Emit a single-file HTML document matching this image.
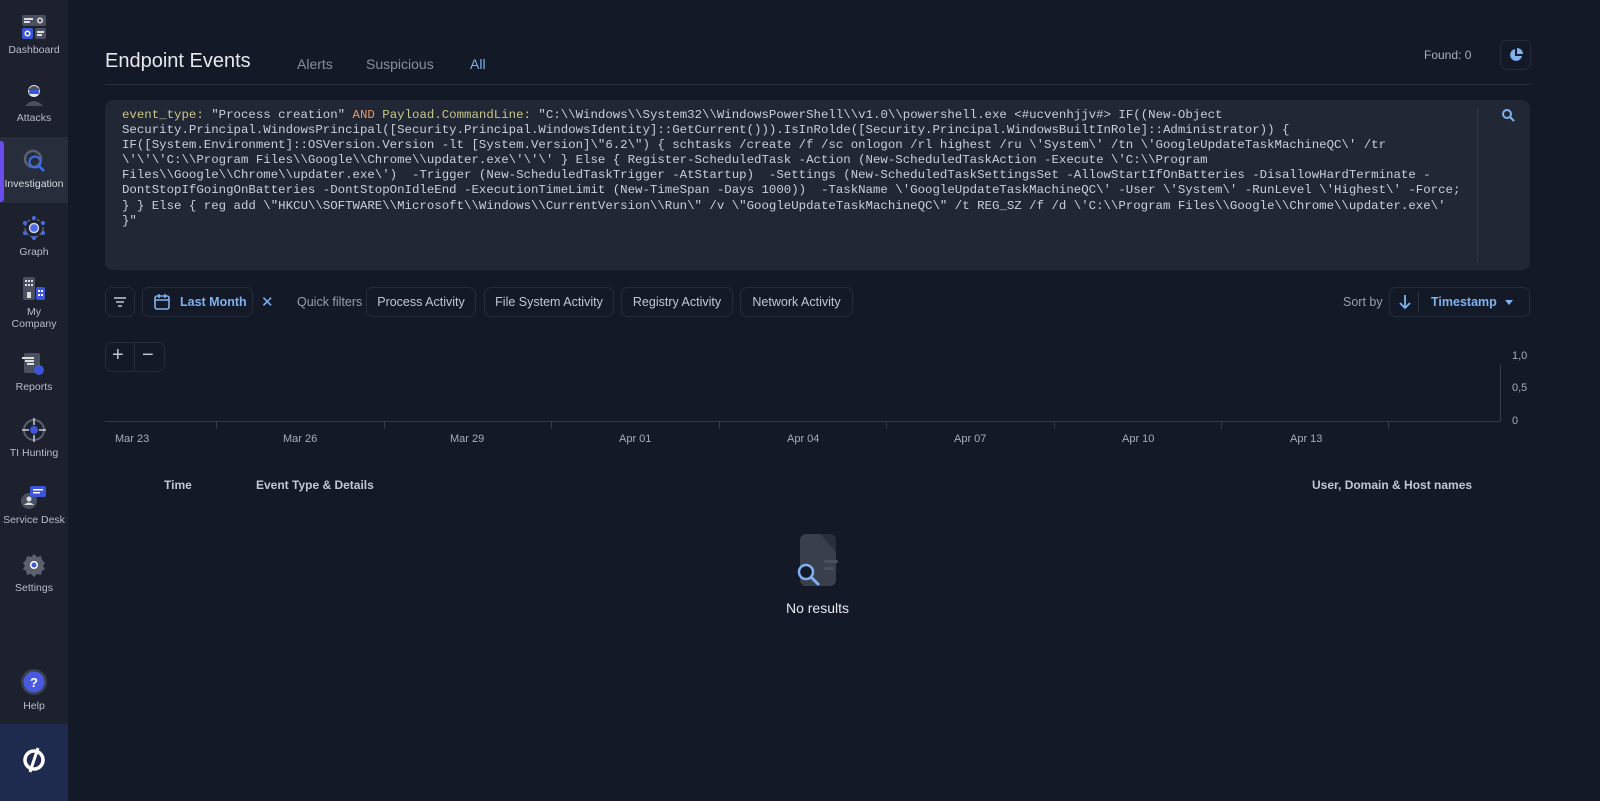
<!DOCTYPE html>
<html><head><meta charset="utf-8"><style>
*{margin:0;padding:0;box-sizing:border-box}
body{width:1600px;height:801px;background:#141927;font-family:"Liberation Sans",sans-serif;color:#c8ccd6;position:relative;overflow:hidden}
.a{position:absolute}
.side{left:0;top:0;width:68px;height:801px;background:#1d212d}
.nav{position:absolute;left:0;width:68px;text-align:center;font-size:10.5px;color:#b9bdc8;line-height:12px}
.nav svg{display:block;margin:0 auto 4px}
.q{font-family:"Liberation Mono",monospace;font-size:12.4px;line-height:15.1px;color:#b6c8e6;white-space:pre}
.btn{position:absolute;height:30px;border:1px solid #262c3b;border-radius:7px;font-size:12.5px;color:#c2c7d2;line-height:28px;text-align:center}
.tick{position:absolute;top:430px;width:1px;height:8px;background:#333a4a}
.lbl{position:absolute;top:433px;font-size:11px;color:#a8adb8}
</style></head><body>
<div class="a side"></div>
<div class="a" style="left:0;top:137px;width:68px;height:66px;background:#282d3b"></div>
<div class="a" style="left:0;top:141px;width:4px;height:61px;background:#6a4cf0;border-radius:0 3px 3px 0"></div>
<div class="a" style="left:0;top:724px;width:68px;height:77px;background:#1f2a4f"></div>

<div class="nav" style="top:14px"><svg width="26" height="26" viewBox="0 0 26 26"><rect x="1" y="1" width="24" height="11" rx="2" fill="#4a5060"/><rect x="3" y="4" width="9" height="2" fill="#ddd"/><rect x="3" y="7" width="6" height="2" fill="#ddd"/><circle cx="19" cy="6.5" r="2.3" fill="none" stroke="#ddd" stroke-width="1.5"/><rect x="1" y="14" width="11" height="11" rx="2" fill="#3d55d8"/><circle cx="6.5" cy="19.5" r="2.3" fill="none" stroke="#fff" stroke-width="1.5"/><rect x="14" y="14" width="11" height="11" rx="2" fill="#4a5060"/><rect x="16" y="17" width="7" height="2" fill="#ddd"/><rect x="16" y="20" width="5" height="2" fill="#ddd"/></svg>Dashboard</div>
<div class="nav" style="top:82px"><svg width="26" height="26" viewBox="0 0 26 26"><circle cx="13" cy="9" r="6" fill="#e6e8ee"/><path d="M7 8 Q13 0 19 8Z" fill="#4a5060"/><rect x="8" y="8" width="10" height="4" rx="1" fill="#3d55d8"/><path d="M4 24 Q13 14 22 24Z" fill="#4a5060"/></svg>Attacks</div>
<div class="nav" style="top:148px;color:#d6d9e0"><svg width="26" height="26" viewBox="0 0 26 26"><circle cx="12" cy="11" r="8" fill="none" stroke="#5a6070" stroke-width="2.5"/><circle cx="14" cy="14" r="5.5" fill="none" stroke="#3d6ee8" stroke-width="2"/><path d="M18 18 L23 23" stroke="#3d6ee8" stroke-width="2.5"/></svg>Investigation</div>
<div class="nav" style="top:214px"><svg width="28" height="28" viewBox="0 0 28 28"><circle cx="14" cy="14" r="9" fill="none" stroke="#5a6070" stroke-width="1.5" stroke-dasharray="3 2"/><circle cx="14" cy="14" r="4.5" fill="#4a6ae8" stroke="#ccd" stroke-width="1.5"/><circle cx="14" cy="4" r="2" fill="#4a6ae8"/><circle cx="14" cy="24" r="2" fill="#4a6ae8"/><circle cx="5" cy="9" r="2" fill="#4a6ae8"/><circle cx="23" cy="9" r="2" fill="#4a6ae8"/><circle cx="5" cy="19" r="2" fill="#4a6ae8"/><circle cx="23" cy="19" r="2" fill="#4a6ae8"/></svg>Graph</div>
<div class="nav" style="top:276px"><svg width="26" height="26" viewBox="0 0 26 26"><rect x="2" y="1" width="12" height="23" rx="2" fill="#4a5060"/><g fill="#ddd"><rect x="4" y="4" width="2" height="2"/><rect x="7" y="4" width="2" height="2"/><rect x="10" y="4" width="2" height="2"/><rect x="4" y="8" width="2" height="2"/><rect x="7" y="8" width="2" height="2"/><rect x="10" y="8" width="2" height="2"/><rect x="6" y="16" width="4" height="6"/></g><rect x="15" y="11" width="9" height="13" rx="2" fill="#3d55d8"/><g fill="#fff"><rect x="17" y="14" width="2" height="2"/><rect x="20" y="14" width="2" height="2"/><rect x="17" y="18" width="2" height="2"/><rect x="20" y="18" width="2" height="2"/></g></svg>My<br>Company</div>
<div class="nav" style="top:351px"><svg width="26" height="26" viewBox="0 0 26 26"><rect x="3" y="2" width="16" height="20" rx="2" fill="#4a5060"/><g fill="#ddd"><rect x="1" y="6" width="12" height="2"/><rect x="4" y="9" width="9" height="2"/><rect x="6" y="12" width="7" height="2"/></g><circle cx="18" cy="19" r="5" fill="#3d55d8"/></svg>Reports</div>
<div class="nav" style="top:417px"><svg width="26" height="26" viewBox="0 0 26 26"><circle cx="13" cy="13" r="10" fill="none" stroke="#5a6070" stroke-width="2"/><path d="M13 1v7M13 18v7M1 13h7M18 13h7" stroke="#ccd" stroke-width="1.5"/><circle cx="13" cy="13" r="4" fill="#3d55d8"/></svg>TI Hunting</div>
<div class="nav" style="top:484px"><svg width="28" height="26" viewBox="0 0 28 26"><circle cx="9" cy="17" r="8" fill="#4a5060"/><circle cx="9" cy="15" r="2.5" fill="#ddd"/><path d="M4 21 Q9 16 14 21Z" fill="#ddd"/><rect x="10" y="2" width="16" height="11" rx="2" fill="#3d55d8"/><g fill="#fff"><rect x="13" y="5" width="10" height="1.5"/><rect x="13" y="8" width="7" height="1.5"/></g></svg>Service Desk</div>
<div class="nav" style="top:552px"><svg width="26" height="26" viewBox="0 0 26 26"><path d="M13 2l3 3 4-1 1 4 3 3-2 3 2 3-3 2-1 4-4-1-3 3-3-3-4 1-1-4-3-2 2-3-2-3 3-3 1-4 4 1z" fill="#5a6070"/><circle cx="13" cy="13" r="4" fill="#fff"/><circle cx="13" cy="13" r="2.5" fill="#3d55d8"/></svg>Settings</div>
<div class="nav" style="top:668px"><svg width="28" height="28" viewBox="0 0 28 28"><circle cx="14" cy="14" r="13" fill="#3a3f4c"/><circle cx="14" cy="14" r="10.5" fill="#4a5ae0"/><text x="14" y="19" text-anchor="middle" font-family="Liberation Sans" font-weight="bold" font-size="13" fill="#fff">?</text></svg>Help</div>
<svg class="a" style="left:21px;top:746px" width="26" height="28" viewBox="0 0 26 28"><circle cx="13" cy="14" r="9" fill="none" stroke="#fff" stroke-width="3.5"/><path d="M17 2 L9 26" stroke="#fff" stroke-width="3"/></svg>

<div class="a" style="left:105px;top:50px;font-size:20px;color:#e6e8ee">Endpoint Events</div>
<div class="a" style="left:297px;top:56px;font-size:14px;color:#8a8f9c">Alerts</div>
<div class="a" style="left:366px;top:56px;font-size:14px;color:#8a8f9c">Suspicious</div>
<div class="a" style="left:470px;top:56px;font-size:14px;color:#7fb2ee">All</div>
<div class="a" style="left:105px;top:84px;width:1425px;height:1px;background:#2a3040"></div>
<div class="a" style="left:1424px;top:48px;font-size:12px;color:#a8adb8">Found: 0</div>
<div class="btn" style="left:1500px;top:40px;width:31px;height:30px"><svg width="16" height="16" viewBox="0 0 16 16" style="margin-top:6px"><path d="M7 2 A6 6 0 1 0 14 9 L7 9Z" fill="#7fb2ee"/><path d="M9 1 A6 6 0 0 1 15 7 L9 7Z" fill="#7fb2ee"/></svg></div>

<div class="a" style="left:105px;top:100px;width:1425px;height:170px;background:#222735;border-radius:8px"></div>
<div class="a" style="left:1477px;top:108px;width:1px;height:154px;background:#323848"></div>
<svg class="a" style="left:1501px;top:108px" width="14" height="14" viewBox="0 0 14 14"><circle cx="6" cy="6" r="4" fill="none" stroke="#7fb2ee" stroke-width="2"/><path d="M9 9l4 4" stroke="#7fb2ee" stroke-width="2"/></svg>
<div class="a q" style="left:122px;top:108px"><span style="color:#c6c78a">event_type:</span> <span style="color:#c9cfdc">"Process creation"</span> <span style="color:#e29b6b">AND</span> <span style="color:#c6c78a">Payload.CommandLine:</span> <span style="color:#c9cfdc">"C:\\Windows\\System32\\WindowsPowerShell\\v1.0\\powershell.exe &lt;#ucvenhjjv#&gt; IF((New-Object
Security.Principal.WindowsPrincipal([Security.Principal.WindowsIdentity]::GetCurrent())).IsInRolde([Security.Principal.WindowsBuiltInRole]::Administrator)) {
IF([System.Environment]::OSVersion.Version -lt [System.Version]\"6.2\") { schtasks /create /f /sc onlogon /rl highest /ru \'System\' /tn \'GoogleUpdateTaskMachineQC\' /tr
\'\'\'C:\\Program Files\\Google\\Chrome\\updater.exe\'\'\' } Else { Register-ScheduledTask -Action (New-ScheduledTaskAction -Execute \'C:\\Program
Files\\Google\\Chrome\\updater.exe\')  -Trigger (New-ScheduledTaskTrigger -AtStartup)  -Settings (New-ScheduledTaskSettingsSet -AllowStartIfOnBatteries -DisallowHardTerminate -
DontStopIfGoingOnBatteries -DontStopOnIdleEnd -ExecutionTimeLimit (New-TimeSpan -Days 1000))  -TaskName \'GoogleUpdateTaskMachineQC\' -User \'System\' -RunLevel \'Highest\' -Force;
} } Else { reg add \"HKCU\\SOFTWARE\\Microsoft\\Windows\\CurrentVersion\\Run\" /v \"GoogleUpdateTaskMachineQC\" /t REG_SZ /f /d \'C:\\Program Files\\Google\\Chrome\\updater.exe\'
}"</span></div>

<div class="btn" style="left:105px;top:287px;width:30px"><svg width="14" height="12" viewBox="0 0 14 12" style="margin-top:8px"><path d="M1 2h12M3 6h8M5 10h4" stroke="#c2c7d2" stroke-width="1.6"/></svg></div>
<div class="btn" style="left:142px;top:287px;width:111px;color:#7fb2ee;font-weight:bold;text-align:left;padding-left:37px">Last Month</div>
<svg class="a" style="left:153px;top:293px" width="18" height="18" viewBox="0 0 18 18"><rect x="2" y="3" width="14" height="13" rx="2" fill="none" stroke="#7fb2ee" stroke-width="1.6"/><path d="M2 7h14M6 1v4M12 1v4" stroke="#7fb2ee" stroke-width="1.6"/></svg>
<div class="a" style="left:261px;top:293px;font-size:15px;color:#7fb2ee">✕</div>
<div class="a" style="left:297px;top:295px;font-size:12.5px;color:#9a9fab">Quick filters</div>
<div class="btn" style="left:366px;top:287px;width:110px">Process Activity</div>
<div class="btn" style="left:484px;top:287px;width:130px">File System Activity</div>
<div class="btn" style="left:621px;top:287px;width:112px">Registry Activity</div>
<div class="btn" style="left:740px;top:287px;width:113px">Network Activity</div>
<div class="a" style="left:1343px;top:295px;font-size:12.5px;color:#9a9fab">Sort by</div>
<div class="btn" style="left:1389px;top:287px;width:141px;color:#7fb2ee;font-weight:bold;text-align:left;padding-left:41px">Timestamp</div>
<svg class="a" style="left:1398px;top:294px" width="14" height="16" viewBox="0 0 14 16"><path d="M7 1v13M2 9l5 5 5-5" fill="none" stroke="#7fb2ee" stroke-width="1.8"/></svg>
<div class="a" style="left:1418px;top:292px;width:1px;height:20px;background:#2e3444"></div>
<div class="a" style="left:1505px;top:300px;width:0;height:0;border-left:4px solid transparent;border-right:4px solid transparent;border-top:5px solid #7fb2ee"></div>

<div class="btn" style="left:105px;top:342px;width:60px"></div>
<div class="a" style="left:134px;top:342px;width:1px;height:30px;background:#262c3b"></div>
<div class="a" style="left:112px;top:344px;font-size:20px;color:#c2c7d2">+</div>
<div class="a" style="left:142px;top:344px;font-size:20px;color:#c2c7d2">−</div>

<div class="a" style="left:105px;top:421px;width:1395px;height:1px;background:#333a4a"></div>
<div class="a" style="left:1500px;top:364px;width:1px;height:58px;background:#333a4a"></div>
<div class="a" style="left:1512px;top:350px;font-size:11px;color:#a8adb8">1,0</div>
<div class="a" style="left:1512px;top:382px;font-size:11px;color:#a8adb8">0,5</div>
<div class="a" style="left:1512px;top:415px;font-size:11px;color:#a8adb8">0</div>
<div class="tick" style="left:216px;top:421px"></div><div class="tick" style="left:384px;top:421px"></div><div class="tick" style="left:551px;top:421px"></div><div class="tick" style="left:719px;top:421px"></div><div class="tick" style="left:886px;top:421px"></div><div class="tick" style="left:1054px;top:421px"></div><div class="tick" style="left:1221px;top:421px"></div><div class="tick" style="left:1388px;top:421px"></div>
<div class="lbl" style="left:115px">Mar 23</div><div class="lbl" style="left:283px">Mar 26</div><div class="lbl" style="left:450px">Mar 29</div><div class="lbl" style="left:619px">Apr 01</div><div class="lbl" style="left:787px">Apr 04</div><div class="lbl" style="left:954px">Apr 07</div><div class="lbl" style="left:1122px">Apr 10</div><div class="lbl" style="left:1290px">Apr 13</div>

<div class="a" style="left:164px;top:478px;font-size:12px;color:#c2c7d2;font-weight:bold">Time</div>
<div class="a" style="left:256px;top:478px;font-size:12px;color:#c2c7d2;font-weight:bold">Event Type &amp; Details</div>
<div class="a" style="left:1312px;top:478px;font-size:12px;color:#c2c7d2;font-weight:bold">User, Domain &amp; Host names</div>

<svg class="a" style="left:792px;top:532px" width="48" height="58" viewBox="0 0 48 58"><rect x="8" y="2" width="36" height="52" rx="6" fill="#3a3f4c"/><path d="M28 2 L44 20 L44 8 Q44 2 38 2Z" fill="#141927" opacity=".4"/><rect x="32" y="28" width="14" height="3" rx="1.5" fill="#4a5060"/><rect x="32" y="35" width="10" height="3" rx="1.5" fill="#4a5060"/><circle cx="14" cy="40" r="7" fill="#141927" stroke="#7fb2ee" stroke-width="2.5"/><path d="M19 45 L26 52" stroke="#7fb2ee" stroke-width="3" stroke-linecap="round"/></svg>
<div class="a" style="left:740px;top:600px;width:155px;text-align:center;font-size:14px;color:#e6e8ee">No results</div>
</body></html>
